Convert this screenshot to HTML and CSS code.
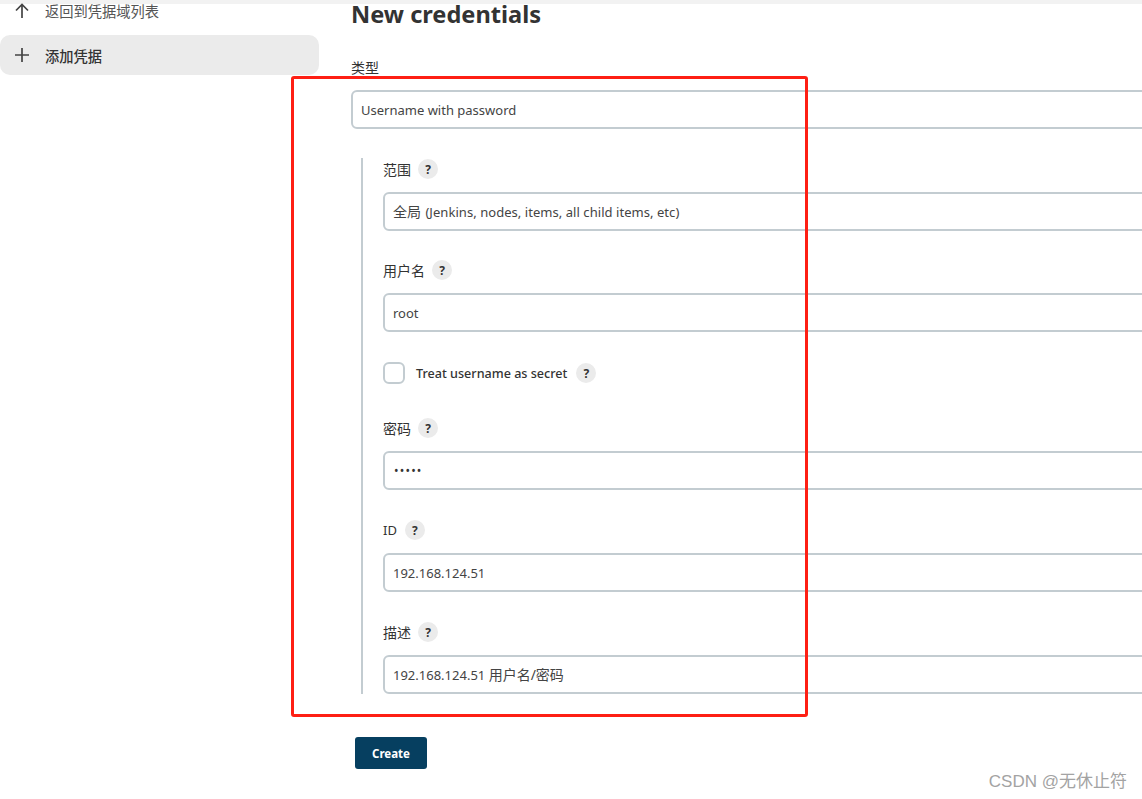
FILE: index.html
```html
<!DOCTYPE html>
<html lang="en">
<head>
    <meta charset="UTF-8">
    <meta name="viewport" content="width=device-width, initial-scale=1.0">
    <title>New credentials</title>
    <link rel="stylesheet" href="styles.css">
</head>
<body>
    <div class="top-strip"></div>

    <div class="page">
        <!-- Side panel -->
        <aside class="side-panel">
            <a class="task">
                <svg class="task-icon" viewBox="0 0 20 20"><path d="M10 17V3.5M4 9.5l6-6 6 6"/></svg>
                <span>返回到凭据域列表</span>
            </a>
            <a class="task active">
                <svg class="task-icon" viewBox="0 0 20 20"><path d="M10 3v14M3 10h14"/></svg>
                <span>添加凭据</span>
            </a>
        </aside>

        <!-- Form -->
        <main class="content">
            <h1 class="page-title">New credentials</h1>

            <label class="type-label zh">类型</label>
            <div class="input">Username with password</div>

            <div class="nested">
                <div class="field scope">
                    <div class="field-label"><span class="zh">范围</span> <span class="help">?</span></div>
                    <div class="input"><span class="zh">全局</span> <span class="scope-text">(Jenkins, nodes, items, all child items, etc)</span></div>
                </div>
                <div class="field">
                    <div class="field-label"><span class="zh">用户名</span> <span class="help">?</span></div>
                    <div class="input">root</div>
                </div>
                <div class="check-row">
                    <span class="checkbox"></span>
                    <span class="check-label">Treat username as secret</span>
                    <span class="help">?</span>
                </div>
                <div class="field">
                    <div class="field-label"><span class="zh">密码</span> <span class="help">?</span></div>
                    <div class="input password">•••••</div>
                </div>
                <div class="field">
                    <div class="field-label"><span class="id-label">ID</span> <span class="help">?</span></div>
                    <div class="input">192.168.124.51</div>
                </div>
                <div class="field last">
                    <div class="field-label"><span class="zh">描述</span> <span class="help">?</span></div>
                    <div class="input">192.168.124.51 <span class="zh">用户名/密码</span></div>
                </div>
            </div>

            <button class="create-button">Create</button>
        </main>
    </div>

    <!-- Annotations on top of the screenshot -->
    <div class="red-box"></div>
    <div class="watermark">CSDN @无休止符</div>
</body>
</html>
```

FILE: styles.css
```css
* {
    margin: 0;
    padding: 0;
    box-sizing: border-box;
}

html, body {
    height: 100%;
    overflow: hidden;
}

body {
    font-family: "Noto Sans", "Noto Sans CJK SC", sans-serif;
    font-size: 13px;
    color: #333;
    background-color: white;
    position: relative;
}

.zh {
    font-size: 14px;
}

.top-strip {
    height: 4px;
    background-color: #f2f2f2;
}

.page {
    display: flex;
}

/* Side panel */
.side-panel {
    width: 319px;
    flex-shrink: 0;
    margin-right: 32px;
    font-size: 14.25px;
}

.task {
    display: flex;
    align-items: center;
    gap: 13px;
    height: 40px;
    padding-left: 12px;
    border-radius: 10px;
    color: #555;
}

.task:first-child {
    height: 31px;
    padding-bottom: 18px;
}

.task.active {
    background-color: #ebebeb;
    font-weight: 500;
    color: #333;
}

.task-icon {
    width: 20px;
    height: 20px;
    fill: none;
    stroke: #444;
    stroke-width: 1.7;
    flex-shrink: 0;
}

/* Form */
.content {
    width: 900px;
    flex-shrink: 0;
}

.page-title {
    font-size: 23.6px;
    font-weight: 700;
    line-height: 20px;
    margin-bottom: 34px;
    color: #333;
}

.type-label {
    display: block;
    line-height: 20px;
    height: 20px;
    margin-bottom: 12px;
}

.input {
    height: 39px;
    line-height: 36px;
    padding-left: 8px;
    border: 2px solid #c3ccd1;
    border-radius: 6px;
    background-color: white;
    color: #444;
    white-space: nowrap;
}

.scope-text {
    margin-left: 1px;
    letter-spacing: 0.05px;
}

.password {
    padding-left: 9px;
    font-size: 12px;
    letter-spacing: 1.2px;
    color: #333;
}

.nested {
    margin-top: 29px;
    margin-left: 10px;
    padding-left: 20px;
    border-left: 2px solid #c3ccd1;
}

.field {
    margin-bottom: 29px;
}

.field.scope {
    margin-bottom: 28px;
}

.field.last {
    margin-bottom: 0;
}

.field-label {
    display: flex;
    align-items: center;
    gap: 7px;
    height: 22px;
    margin-bottom: 12px;
    color: #333;
}

.id-label {
    margin-right: 1px;
}

.help {
    display: inline-flex;
    justify-content: center;
    align-items: center;
    width: 20px;
    height: 20px;
    border-radius: 50%;
    background-color: #ebebeb;
    font-size: 12px;
    font-weight: 700;
    color: #333;
}

.check-row {
    display: flex;
    align-items: center;
    height: 22px;
    margin-top: 30px;
    margin-bottom: 33px;
}

.checkbox {
    width: 22px;
    height: 22px;
    border: 2px solid #c3ccd1;
    border-radius: 6px;
    margin-right: 11px;
}

.check-label {
    font-size: 12.6px;
    font-weight: 500;
    margin-right: 9px;
}

.create-button {
    display: block;
    width: 72px;
    height: 32px;
    margin-top: 43px;
    margin-left: 4px;
    border: none;
    border-radius: 3px;
    background-color: #063f60;
    color: white;
    font-family: "Noto Sans", sans-serif;
    font-size: 11.5px;
    font-weight: 700;
}

/* Annotations */
.red-box {
    position: absolute;
    left: 291px;
    top: 76px;
    width: 517px;
    height: 641px;
    border: 3px solid #fe1f14;
    border-radius: 3px;
}

.watermark {
    position: absolute;
    right: 15px;
    top: 770px;
    font-family: "Liberation Sans", "Noto Sans CJK SC", sans-serif;
    font-size: 17px;
    line-height: 24px;
    color: #a3a3a3;
}
```
